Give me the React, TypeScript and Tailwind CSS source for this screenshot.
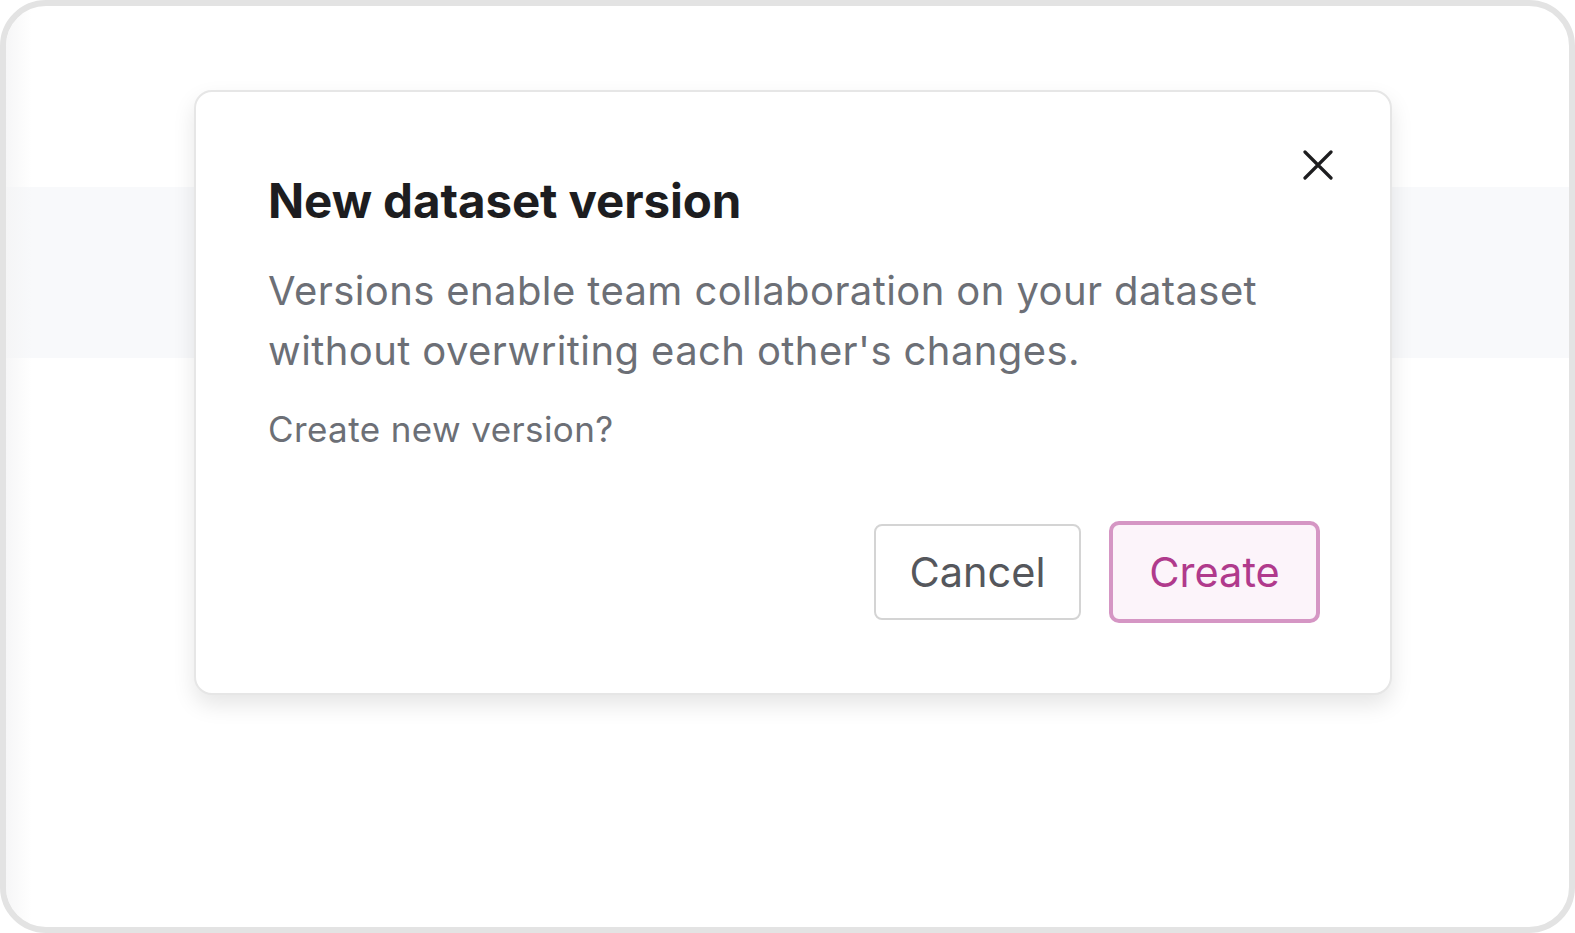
export default function App() {
  return (
    <div
      className="w-[1575px] h-[933px] bg-white overflow-hidden"
      style={{ fontFamily: "Inter, 'Noto Sans', sans-serif" }}
    >
      <div className="relative w-full h-full rounded-[46px] border-[6px] border-[#e3e3e3] bg-white overflow-hidden">
        {/* faded page behind the modal */}
        <div className="absolute left-0 right-0 top-[181px] h-[171px] bg-[#f8f9fb]" />
        <div className="absolute left-0 top-0 bottom-0 w-[26px] bg-gradient-to-r from-[#f4f4f5] to-transparent opacity-80" />

        <div className="relative flex pt-[84px] pl-[188px]">
          <div className="relative w-[1198px] h-[605px] rounded-[18px] border-2 border-[#e6e6e6] bg-white shadow-[0_10px_22px_rgba(0,0,0,0.10)] flex flex-col pl-[72px] pr-[70px] pt-[80px]">
            <button className="absolute top-[58px] right-[57px] text-[#1d1d1f]">
              <svg width="30" height="30" viewBox="0 0 30 30" fill="none">
                <path
                  d="M2 2L28 28M28 2L2 28"
                  stroke="currentColor"
                  strokeWidth="3.2"
                  strokeLinecap="round"
                />
              </svg>
            </button>
            <h1 className="text-[47.5px] leading-[58px] font-bold text-[#1d1d20] tracking-[-0.1px]">
              New dataset version
            </h1>
            <p className="mt-[31px] text-[40px] leading-[60px] text-[#6c6f76] tracking-[0.4px]">
              Versions enable team collaboration on your dataset
              <br />
              without overwriting each other's changes.
            </p>
            <p className="mt-[26px] text-[35px] leading-[44px] text-[#6c6f76] tracking-[0.4px]">
              Create new version?
            </p>
            <div className="flex justify-end items-center gap-[28px] mt-[70px] h-[102px]">
              <button className="w-[207px] h-[96px] rounded-[8px] border-2 border-[#d4d4d4] bg-white text-[41.5px] text-[#55575c]">
                Cancel
              </button>
              <button className="w-[211px] h-[102px] rounded-[10px] border-4 border-[#d596c4] bg-[#fcf4fa] text-[41.5px] text-[#b03a8c]">
                Create
              </button>
            </div>
          </div>
        </div>
      </div>
    </div>
  );
}
